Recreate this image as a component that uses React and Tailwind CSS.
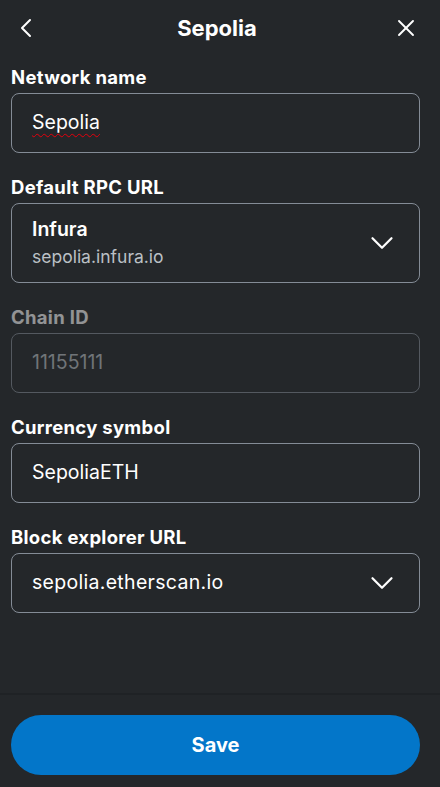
import { ChevronLeft, ChevronDown, X } from 'lucide-react';

function Field({ label, disabled, children, tall }) {
  return (
    <div className={disabled ? 'opacity-50' : ''}>
      <label className="block h-6 text-[18.5px] leading-6 font-bold tracking-[0.3px] text-white mb-1">{label}</label>
      <div
        className={`flex items-center justify-between border border-[#848c96] rounded-[8px] pl-5 pr-[18px] ${
          tall ? 'h-[80px]' : 'h-[60px]'
        }`}
      >
        {children}
      </div>
    </div>
  );
}

function Chevron() {
  return <ChevronDown className="w-[38px] h-[38px] text-white" strokeWidth={1.4} />;
}

export default function App() {
  return (
    <div
      className="w-[440px] h-[787px] bg-[#24272a] text-white flex flex-col"
      style={{ fontFamily: 'Inter, "Liberation Sans", sans-serif' }}
    >
      {/* Header */}
      <div className="h-[56px] shrink-0 flex items-center justify-between pl-[10px] pr-5">
        <ChevronLeft className="w-8 h-8 text-white" strokeWidth={1.5} />
        <h1 className="text-[22px] font-bold">Sepolia</h1>
        <X className="w-7 h-7 text-white" strokeWidth={1.6} />
      </div>

      {/* Form */}
      <div className="flex-1 pl-[11px] pr-5 pt-[9px] flex flex-col gap-[22px]">
        <Field label="Network name">
          <span className="text-[19.5px] underline decoration-wavy decoration-red-600 decoration-1 underline-offset-4">
            Sepolia
          </span>
        </Field>

        <Field label="Default RPC URL" tall>
          <div className="flex flex-col">
            <span className="text-[19.5px] font-semibold leading-7">Infura</span>
            <span className="text-[17.5px] text-[#bbc0c5] leading-7">sepolia.infura.io</span>
          </div>
          <Chevron />
        </Field>

        <Field label="Chain ID" disabled>
          <span className="text-[19.5px] text-[#bbc0c5]">11155111</span>
        </Field>

        <Field label="Currency symbol">
          <span className="text-[19.5px]">SepoliaETH</span>
        </Field>

        <Field label="Block explorer URL">
          <span className="text-[19.5px] tracking-[0.3px]">sepolia.etherscan.io</span>
          <Chevron />
        </Field>
      </div>

      {/* Footer */}
      <div className="shrink-0 border-t-2 border-[#1f2225] pl-[11px] pr-5 pt-5 pb-3">
        <button className="w-full h-[60px] rounded-full bg-[#0376c9] text-white text-[20px] font-bold">
          Save
        </button>
      </div>
    </div>
  );
}
